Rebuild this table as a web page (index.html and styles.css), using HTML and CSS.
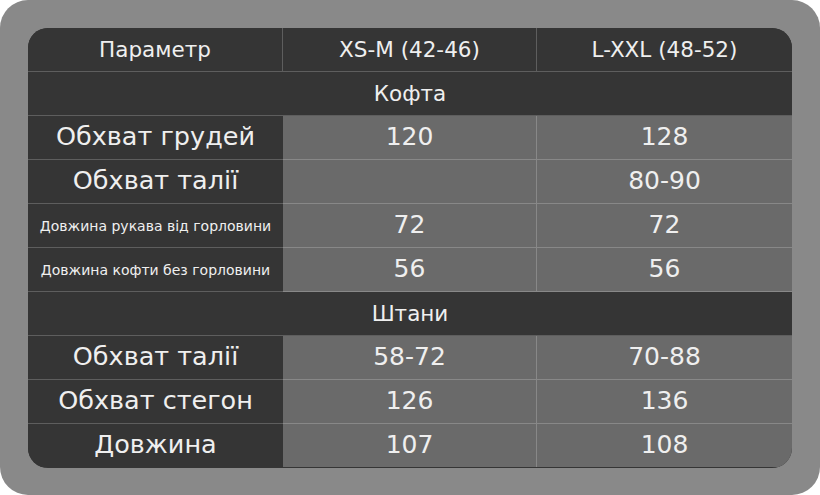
FILE: index.html
```html
<!DOCTYPE html>
<html lang="uk">
<head>
<meta charset="utf-8">
<title>Розмірна сітка</title>
<link rel="stylesheet" href="styles.css">
</head>
<body>
<div class="page">
  <div class="table">
    <div class="cell head c1">Параметр</div>
    <div class="cell head c2">XS-M (42-46)</div>
    <div class="cell head c3">L-XXL (48-52)</div>

    <div class="cell section">Кофта</div>

    <div class="cell label c1">Обхват грудей</div>
    <div class="cell value c2">120</div>
    <div class="cell value c3">128</div>

    <div class="cell label c1">Обхват талії</div>
    <div class="cell value c2"></div>
    <div class="cell value c3">80-90</div>

    <div class="cell label small c1">Довжина рукава від горловини</div>
    <div class="cell value c2">72</div>
    <div class="cell value c3">72</div>

    <div class="cell label small c1">Довжина кофти без горловини</div>
    <div class="cell value c2">56</div>
    <div class="cell value c3">56</div>

    <div class="cell section">Штани</div>

    <div class="cell label c1">Обхват талії</div>
    <div class="cell value c2">58-72</div>
    <div class="cell value c3">70-88</div>

    <div class="cell label c1">Обхват стегон</div>
    <div class="cell value c2">126</div>
    <div class="cell value c3">136</div>

    <div class="cell label c1 last">Довжина</div>
    <div class="cell value c2 last">107</div>
    <div class="cell value c3 last">108</div>
  </div>
</div>
</body>
</html>
```

FILE: styles.css
```css
html, body {
  margin: 0;
  padding: 0;
  background: #ffffff;
}

.page {
  width: 820px;
  height: 495px;
  box-sizing: border-box;
  padding: 28px;
  background: #898989;
  border-radius: 28px;
  font-family: "DejaVu Sans", "Noto Sans", sans-serif;
  color: #efefef;
}

.table {
  display: grid;
  grid-template-columns: 255px 254px 255px;
  grid-auto-rows: 44px;
  border-radius: 20px;
  overflow: hidden;
  background: #353535;
}

.cell {
  display: flex;
  align-items: center;
  justify-content: center;
  box-sizing: border-box;
  border-bottom: 1px solid #5e5e5e;
  white-space: nowrap;
}

.head {
  font-size: 21.5px;
  background: #353535;
}

.head.c1,
.head.c2 {
  border-right: 1px solid #5e5e5e;
}

.section {
  grid-column: 1 / -1;
  font-size: 21.5px;
  background: #353535;
}

.label {
  font-size: 25.5px;
  padding-bottom: 3px;
  background: #353535;
}

.label.small {
  font-size: 14px;
  padding-bottom: 0;
}

.value {
  font-size: 25px;
  padding-bottom: 2px;
  background: #6a6a6a;
  border-bottom-color: #888888;
}

.value.c2 {
  border-right: 1px solid #888888;
}

.last {
  border-bottom: none;
  height: 43px;
}
```
